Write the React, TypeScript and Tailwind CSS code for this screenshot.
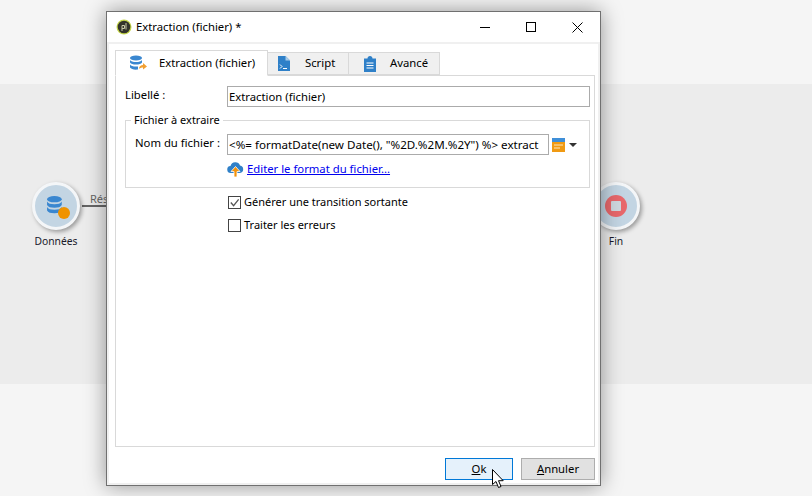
function DataIcon({ className }: { className?: string }) {
  return (
    <svg className={className} viewBox="0 0 20 20" width="21" height="21">
      <ellipse cx="8" cy="4" rx="7" ry="3" fill="#3a87d0" />
      <path d="M1 6.200c1 2 3.500 2.600 7 2.600s6-.6 7-2.600v3.300c-1 2-3.500 2.600-7 2.600s-6-.6-7-2.600z" fill="#3a87d0" />
      <path d="M1 11.500c1 2 3.500 2.600 7 2.600s6-.6 7-2.600v3.300c-1 2-3.500 2.600-7 2.600s-6-.6-7-2.600z" fill="#3a87d0" />
    </svg>
  );
}

function CanvasNode({ label, children, className }: { label: string; children: React.ReactNode; className: string }) {
  return (
    <div className={`absolute flex w-[60px] flex-col items-center ${className}`}>
      <div className="flex h-[48px] w-[48px] items-center justify-center rounded-full border-[3px] border-[#f4f6f8] bg-[#c3d5e3] shadow-[2px_2px_4px_rgba(0,0,0,0.35)]">
        {children}
      </div>
      <span className="mt-[4px] text-[10.300px] leading-[15px] text-[#1a1a2a]">{label}</span>
    </div>
  );
}

function Tab({ label, active, width, iconBox, icon }: { label: string; active?: boolean; width: string; iconBox: string; icon: React.ReactNode }) {
  return (
    <div
      className={`relative flex items-center border border-[#d9d9d9] ${width} ${
        active ? 'z-10 -mb-px h-[26px] border-b-white bg-white' : 'h-[23px] border-l-0 bg-[#f0f0f0]'
      }`}
    >
      <span className={`flex justify-center ${iconBox}`}>{icon}</span>
      <span className="text-[11.300px] text-black">{label}</span>
    </div>
  );
}

function Checkbox({ label, checked }: { label: string; checked?: boolean }) {
  return (
    <div className="flex h-[13px] items-center">
      <span className="flex h-[13px] w-[13px] items-center justify-center border border-[#444] bg-white">
        {checked && (
          <svg viewBox="0 0 12 12" width="11" height="11">
            <path d="M2 6l3 3.500L10.500 2.500" fill="none" stroke="#555" strokeWidth="1.400" />
          </svg>
        )}
      </span>
      <span className="ml-[3px] text-[11px] text-black">{label}</span>
    </div>
  );
}

export default function App() {
  return (
    <div className="relative h-[496px] w-[812px] overflow-hidden bg-[#f5f5f5] font-['Noto_Sans',sans-serif]">
      {/* Canvas behind the dialog */}
      <div className="absolute left-0 top-[84px] h-[300px] w-full bg-[#ececec]" />
      <div className="absolute left-[82px] top-[205px] h-[2px] w-[30px] bg-[#666]" />
      <span className="absolute left-[90px] top-[192px] text-[11px] leading-[13px] text-[#666]">Rés</span>
      <CanvasNode label="Données" className="left-[26px] top-[182px]">
        <span className="relative h-[24px] w-[24px]">
          <DataIcon className="absolute left-[2px] top-[1px]" />
          <span className="absolute bottom-[-1px] right-[-2px] h-[12px] w-[12px] rounded-full bg-[#ef9300]" />
        </span>
      </CanvasNode>
      <CanvasNode label="Fin" className="left-[586px] top-[182px]">
        <span className="flex h-[22px] w-[22px] items-center justify-center rounded-full bg-[#e8686c]">
          <span className="h-[10px] w-[10px] rounded-[1px] bg-[#cfd8df]" />
        </span>
      </CanvasNode>

      {/* Dialog window */}
      <div className="absolute left-[106px] top-[11px] flex h-[475px] w-[495px] flex-col border border-[#707070] bg-[#f0f0f0] shadow-[0_0_20px_rgba(0,0,0,0.4)]">
        <div className="flex h-[30px] shrink-0 items-center bg-white pl-[9px]">
          <svg viewBox="0 0 16 16" width="16" height="16" className="shrink-0">
            <circle cx="8" cy="8" r="7.500" fill="#c5d64a" />
            <circle cx="8" cy="8" r="6.300" fill="#33332b" />
            <path d="M6 12V6.500h2.500v3H6M10 4v6.500" fill="none" stroke="#c9c9a8" strokeWidth="1" />
          </svg>
          <span className="ml-[4px] text-[11.300px] text-black">Extraction (fichier) *</span>
          <div className="ml-auto flex items-center">
            <span className="flex w-[46px] justify-center">
              <svg viewBox="0 0 11 11" width="11" height="11"><path d="M0 5.500h10" stroke="#000" strokeWidth="1" /></svg>
            </span>
            <span className="flex w-[46px] justify-center">
              <svg viewBox="0 0 10 10" width="10" height="10"><rect x="0.500" y="0.500" width="9" height="9" fill="none" stroke="#000" /></svg>
            </span>
            <span className="flex w-[46px] justify-center">
              <svg viewBox="0 0 11 11" width="11" height="11"><path d="M.5.500l10 10M10.500.500l-10 10" stroke="#000" strokeWidth="1" /></svg>
            </span>
          </div>
        </div>

        <div className="mx-[2px] mb-[2px] mt-[2px] flex min-h-0 flex-1 flex-col bg-white pl-[6px] pt-[6px]">
          <div className="flex items-end">
            <Tab
              label="Extraction (fichier)"
              active
              width="w-[153px]"
              iconBox="w-[43px]"
              icon={
                <svg viewBox="0 0 18 16" width="18" height="16">
                  <ellipse cx="7" cy="3" rx="6" ry="2.500" fill="#3a87d0" />
                  <path d="M1 5c1 1.500 3 2 6 2s5-.5 6-2v2.500c-1 1.500-3 2-6 2s-5-.5-6-2zM1 9.500c1 1.500 3 2 6 2h2v3c-4 .5-7-.5-8-2z" fill="#3a87d0" />
                  <path d="M10 14c0-3 2-4 4-4V8l4 3.500-4 3v-2c-1.500 0-3 .5-4 1.500z" fill="#f2a032" />
                </svg>
              }
            />
            <Tab
              label="Script"
              width="w-[81px]"
              iconBox="w-[37px] pr-[5px]"
              icon={
                <svg viewBox="0 0 12 15" width="12" height="15">
                  <path d="M0 0h7.500L12 4.500V15H0z" fill="#2f80c8" />
                  <path d="M7.500 0L12 4.500H7.500z" fill="#a8cbe8" />
                  <path d="M2 8.500l2 2-2 2M5 12.500h4" fill="none" stroke="#fff" strokeWidth="1" />
                </svg>
              }
            />
            <Tab
              label="Avancé"
              width="w-[91px]"
              iconBox="w-[41px]"
              icon={
                <svg viewBox="0 0 12 16" width="12" height="16">
                  <path d="M0 2.500h3.500C3.500 1 4.500 0 6 0s2.500 1 2.500 2.500H12V16H0z" fill="#2f80c8" />
                  <path d="M2.500 7h7M2.500 9.500h7M2.500 12h7" stroke="#fff" strokeWidth="1" />
                </svg>
              }
            />
          </div>

          <div className="flex h-[372px] w-[480px] flex-col border border-[#d9d9d9] bg-white pl-[9px] pt-[10px]">
            <div className="flex h-[21px] items-center">
              <span className="w-[102px] pb-[2px] text-[11.300px] text-black">Libellé :</span>
              <input
                readOnly
                value="Extraction (fichier)"
                className="h-[21px] w-[363px] border border-[#ababab] bg-white px-[1px] text-[11.300px] text-black outline-none"
              />
            </div>

            <div className="relative mt-[13px] h-[68px] w-[465px] border border-[#d9d9d9] pl-[9px] pt-[13px]">
              <span className="absolute left-[5px] top-[-9px] bg-white px-[3px] text-[11px] leading-[16px] text-black">Fichier à extraire</span>
              <div className="flex h-[21px] items-center">
                <span className="w-[92px] pb-[3px] text-[11.300px] text-black">Nom du fichier :</span>
                <input
                  readOnly
                  value={'<%= formatDate(new Date(), "%2D.%2M.%2Y") %> extract'}
                  className="h-[21px] w-[322px] border border-[#ababab] bg-white px-[1px] text-[11.600px] text-black outline-none"
                />
                <svg viewBox="0 0 14 14" width="14" height="14" className="ml-[3px]">
                  <rect width="13" height="4" fill="#3f8fd8" />
                  <rect y="4" width="13" height="10" fill="#f09a13" />
                  <path d="M2 7h9M2 10h6" stroke="#fde7c0" strokeWidth="1" />
                </svg>
                <svg viewBox="0 0 10 5" width="8" height="4" className="ml-[3px]">
                  <path d="M0 0h10L5 5z" fill="#333" />
                </svg>
              </div>
              <div className="ml-[92px] mt-[4px] flex h-[20px] items-center">
                <svg viewBox="0 0 17 16" width="17" height="16" className="shrink-0">
                  <path d="M4 12a3.500 3.500 0 0 1-.5-7A5 5 0 0 1 13 4.500a3.800 3.800 0 0 1 0 7.500z" fill="#2f80c8" />
                  <path d="M8.500 5.500L13 10.500h-3V16H7v-5.500H4z" fill="#f2920c" stroke="#fff" strokeWidth="0.800" />
                </svg>
                <a className="ml-[3px] text-[11.300px] text-[#0000ee] underline">Editer le format du fichier...</a>
              </div>
            </div>

            <div className="ml-[103px] mt-[8px] flex flex-col gap-[10px]">
              <Checkbox label="Générer une transition sortante" checked />
              <Checkbox label="Traiter les erreurs" />
            </div>
          </div>

          <div className="flex w-[480px] justify-end gap-[8px] pt-[11px]">
            <button className="h-[22px] w-[68px] border border-[#0078d7] bg-[#e5f1fb] text-[11.300px] text-black">
              <span className="underline">O</span>k
            </button>
            <button className="h-[22px] w-[74px] border border-[#adadad] bg-[#e1e1e1] text-[11.300px] text-black">
              <span className="underline">A</span>nnuler
            </button>
          </div>
        </div>
      </div>

      {/* Mouse pointer */}
      <svg viewBox="0 0 13 19" width="13" height="19" className="absolute left-[492px] top-[469px]">
        <path d="M.5.500v15l3.500-3 2.500 6 2.500-1-2.500-5.800h4.700z" fill="#fff" stroke="#000" strokeWidth="1" />
      </svg>
    </div>
  );
}
